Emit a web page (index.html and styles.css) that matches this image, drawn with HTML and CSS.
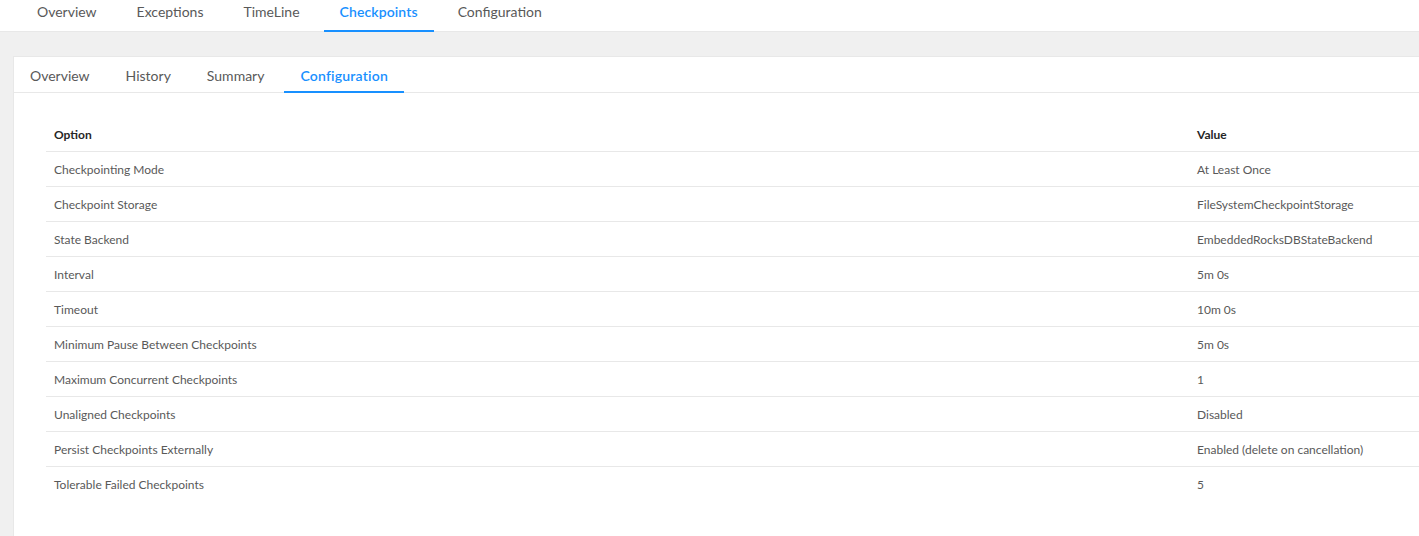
FILE: index.html
```html
<!DOCTYPE html>
<html>
<head>
<meta charset="utf-8">
<link rel="stylesheet" href="styles.css">
</head>
<body>
<div class="page">
  <nav class="top-tabs">
    <a class="tab">Overview</a>
    <a class="tab">Exceptions</a>
    <a class="tab">TimeLine</a>
    <a class="tab active">Checkpoints</a>
    <a class="tab">Configuration</a>
  </nav>
  <main class="content">
    <section class="card">
      <nav class="sub-tabs">
        <a class="stab">Overview</a>
        <a class="stab">History</a>
        <a class="stab">Summary</a>
        <a class="stab active">Configuration</a>
      </nav>
      <div class="card-body">
        <table class="cfg">
          <thead>
            <tr><th class="opt">Option</th><th>Value</th></tr>
          </thead>
          <tbody>
            <tr><td>Checkpointing Mode</td><td>At Least Once</td></tr>
            <tr><td>Checkpoint Storage</td><td>FileSystemCheckpointStorage</td></tr>
            <tr><td>State Backend</td><td>EmbeddedRocksDBStateBackend</td></tr>
            <tr><td>Interval</td><td>5m 0s</td></tr>
            <tr><td>Timeout</td><td>10m 0s</td></tr>
            <tr><td>Minimum Pause Between Checkpoints</td><td>5m 0s</td></tr>
            <tr><td>Maximum Concurrent Checkpoints</td><td>1</td></tr>
            <tr><td>Unaligned Checkpoints</td><td>Disabled</td></tr>
            <tr><td>Persist Checkpoints Externally</td><td>Enabled (delete on cancellation)</td></tr>
            <tr><td>Tolerable Failed Checkpoints</td><td>5</td></tr>
          </tbody>
        </table>
      </div>
    </section>
  </main>
</div>
</body>
</html>
```
FILE: styles.css
```css
html, body {
  margin: 0;
  padding: 0;
  background: #f0f0f0;
  overflow: hidden;
}
body {
  font-family: Lato, "Open Sans", sans-serif;
  color: #595959;
}
.page {
  width: 1460px;
  height: 536px;
  overflow: hidden;
}
.top-tabs {
  display: flex;
  gap: 8px;
  height: 31px;
  padding-left: 21px;
  background: #fff;
  border-bottom: 1px solid #e8e8e8;
}
.tab {
  display: flex;
  align-items: center;
  padding: 0 16px 8px;
  font-size: 14px;
  color: #595959;
  border-bottom: 2px solid transparent;
  box-sizing: content-box;
  height: 22px;
  margin-bottom: -1px;
}
.tab.active {
  color: #1890ff;
  font-weight: 600;
  letter-spacing: 0.1px;
  border-bottom-color: #1890ff;
}
.content {
  padding: 24px 0 0 13px;
}
.card {
  background: #fff;
  border: 1px solid #e8e8e8;
  border-right: none;
  height: 600px;
}
.sub-tabs {
  display: flex;
  gap: 4px;
  height: 35px;
  border-bottom: 1px solid #e8e8e8;
}
.stab {
  display: flex;
  align-items: center;
  padding: 2px 16px 0;
  font-size: 14px;
  color: #595959;
  border-bottom: 2px solid transparent;
  margin-bottom: -1px;
  height: 32px;
}
.stab.active {
  color: #1890ff;
  font-weight: 600;
  letter-spacing: 0.2px;
  border-bottom-color: #1890ff;
}
.card-body {
  padding: 24px 0 0 32px;
}
.cfg {
  width: 1400px;
  border-collapse: collapse;
  font-size: 12px;
}
.cfg th {
  text-align: left;
  font-weight: 700;
  color: #262626;
  height: 34px;
  padding: 0 8px;
  border-bottom: 1px solid #e8e8e8;
}
.cfg th.opt {
  width: 1127px;
}
.cfg td {
  height: 34px;
  padding: 0 8px;
  border-bottom: 1px solid #e8e8e8;
}
.cfg tbody tr:last-child td {
  border-bottom: none;
}
```
